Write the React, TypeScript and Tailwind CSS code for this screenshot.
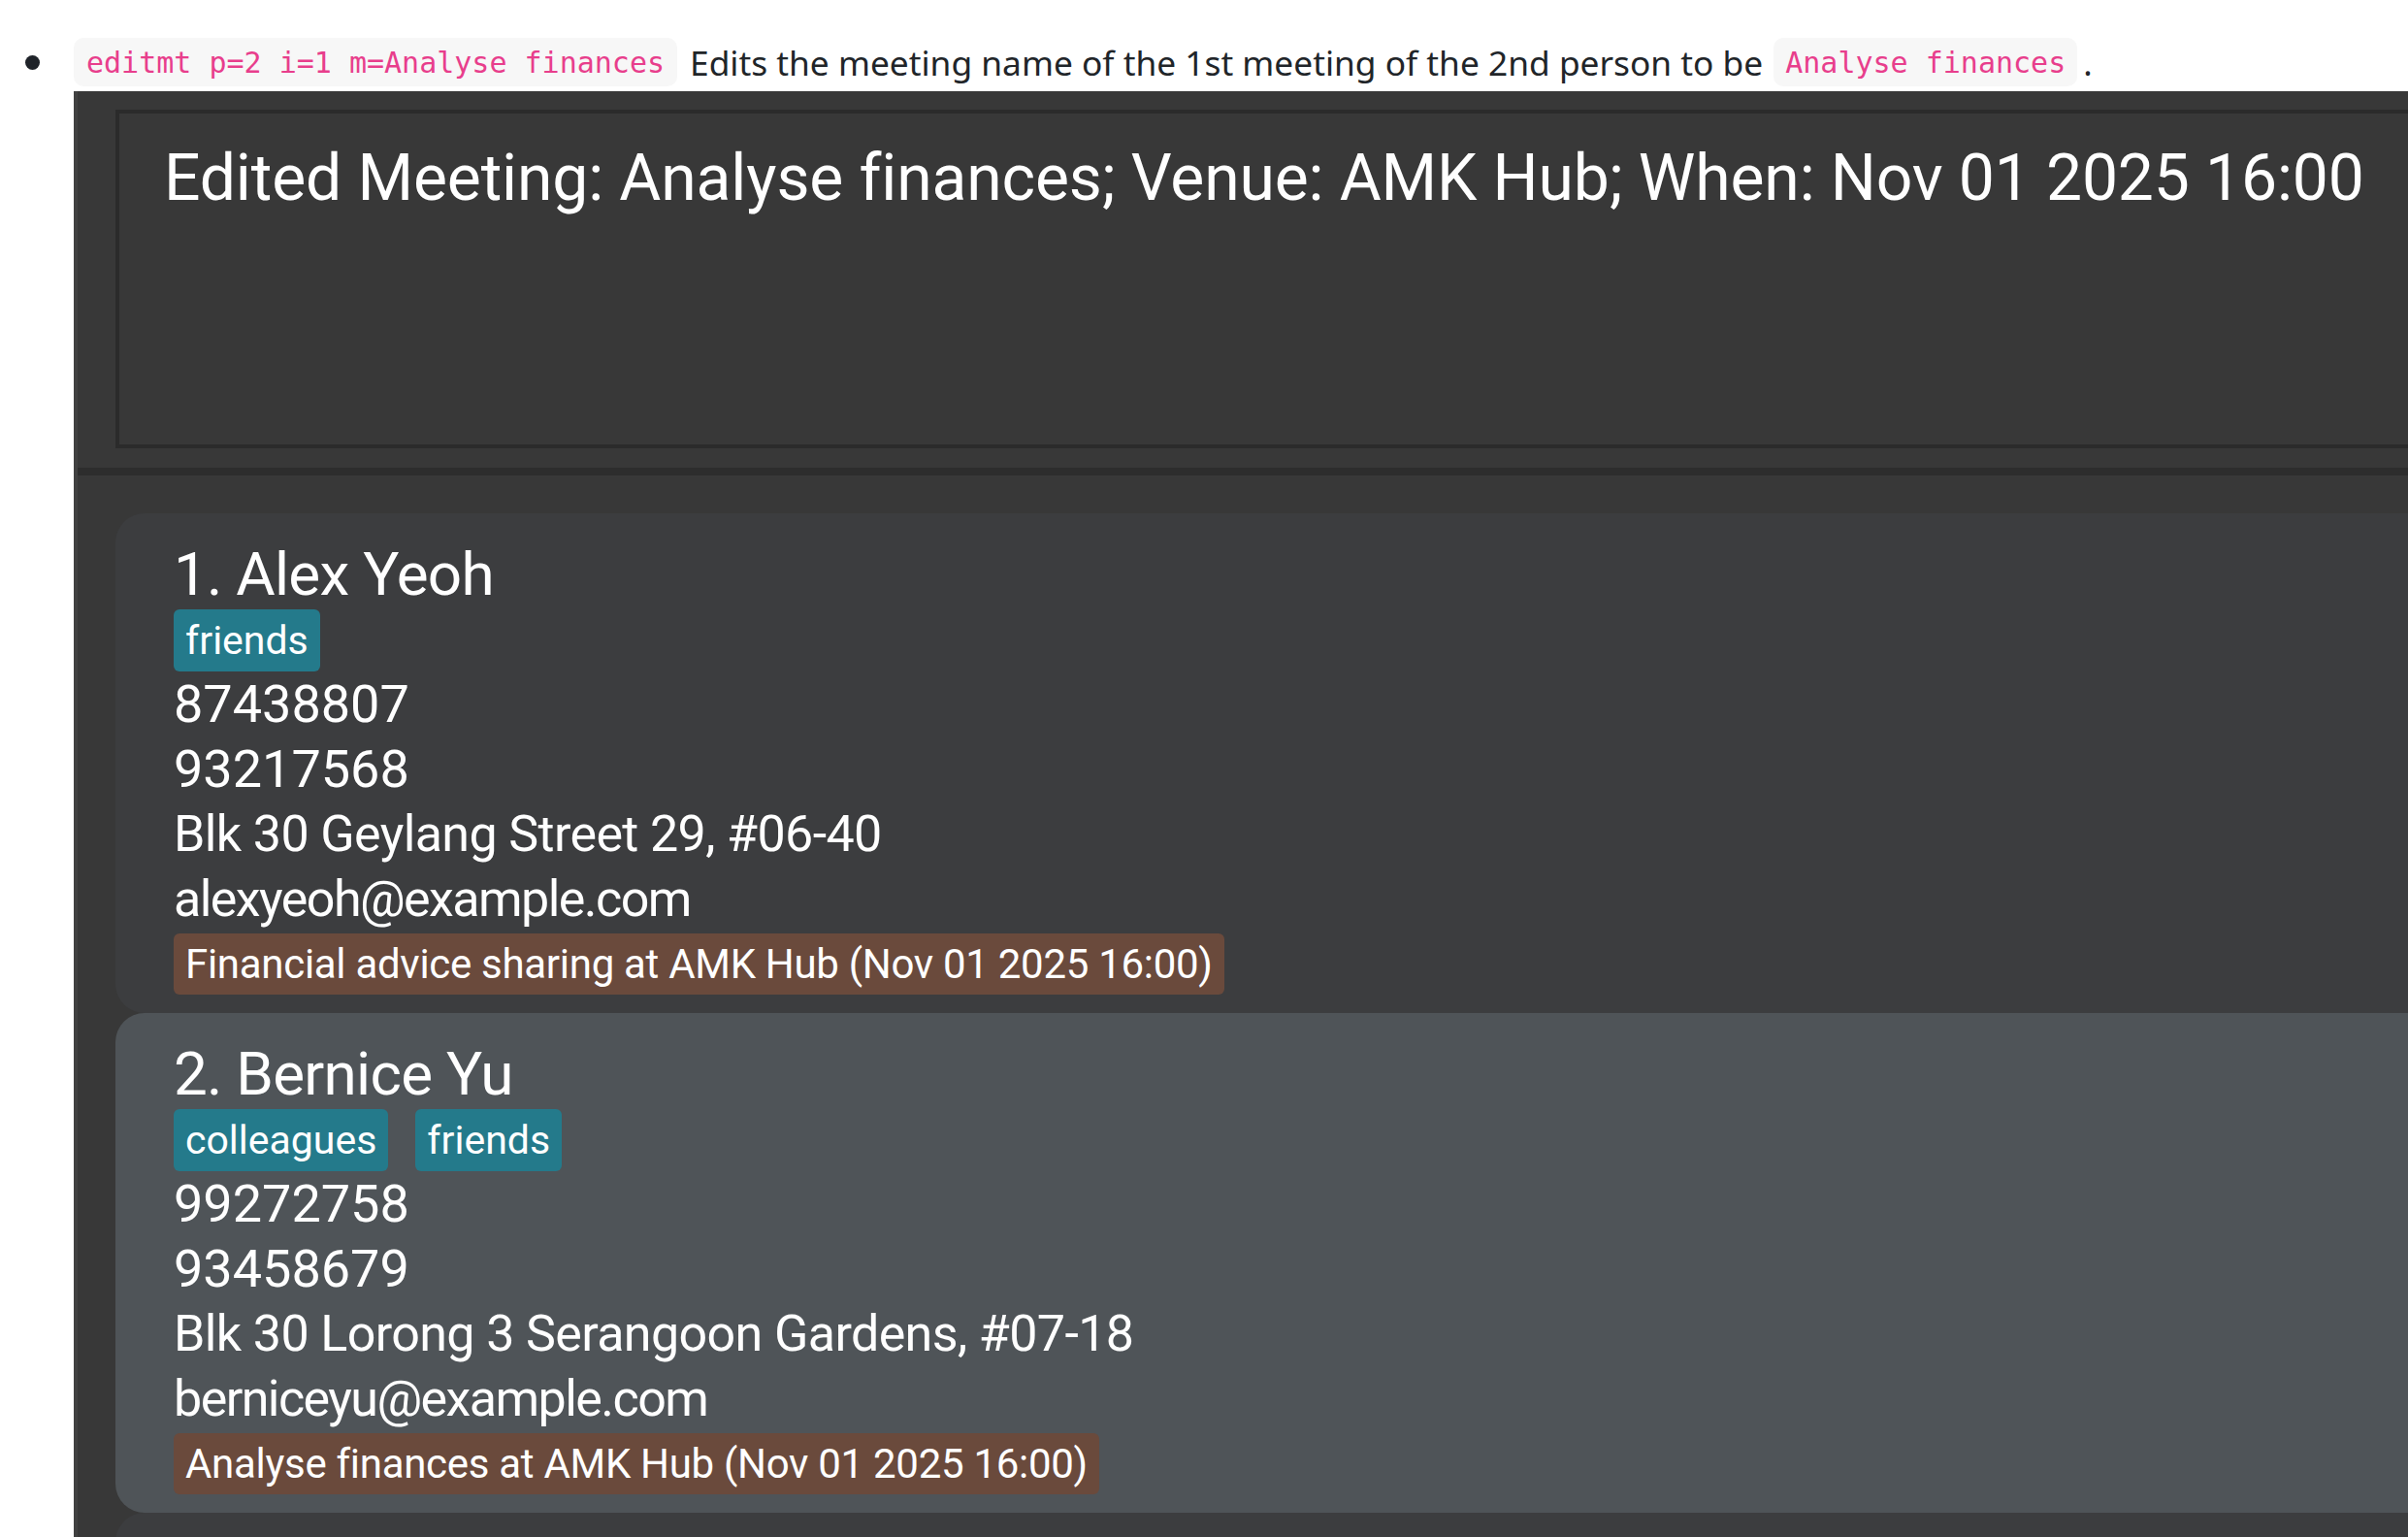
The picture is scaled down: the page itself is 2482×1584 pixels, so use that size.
const people = [
  {
    name: "1. Alex Yeoh",
    tags: ["friends"],
    phones: ["87438807", "93217568"],
    address: "Blk 30 Geylang Street 29, #06-40",
    email: "alexyeoh@example.com",
    meeting: "Financial advice sharing at AMK Hub (Nov 01 2025 16:00)",
  },
  {
    name: "2. Bernice Yu",
    tags: ["colleagues", "friends"],
    phones: ["99272758", "93458679"],
    address: "Blk 30 Lorong 3 Serangoon Gardens, #07-18",
    email: "berniceyu@example.com",
    meeting: "Analyse finances at AMK Hub (Nov 01 2025 16:00)",
  },
];

type Person = (typeof people)[number];

const app = { fontFamily: "Roboto, 'Liberation Sans', sans-serif" };

function Card({ p, odd }: { p: Person; odd: boolean }) {
  return (
    <div
      className={`rounded-l-[30px] pl-[60px] pt-[27px] pb-[19px] text-white ${
        odd ? "bg-[#4f5458]" : "bg-[#3c3d3f]"
      }`}
      style={app}
    >
      <div className="text-[62px] leading-[72px] tracking-[-0.012em]">{p.name}</div>
      <div className="flex gap-[28px]">
        {p.tags.map((t) => (
          <div
            key={t}
            className="h-[64px] px-[12px] pt-[1px] rounded-[6px] bg-[#247a8b] text-[41px] leading-[63px]"
          >
            {t}
          </div>
        ))}
      </div>
      {p.phones.map((ph) => (
        <div key={ph} className="text-[54px] leading-[67px]">
          {ph}
        </div>
      ))}
      <div className="text-[52px] leading-[67px] tracking-[-0.012em]">{p.address}</div>
      <div className="text-[52px] leading-[67px] tracking-[-0.03em]">{p.email}</div>
      <div className="mt-[2px] flex">
        <div className="h-[63px] px-[12px] rounded-[6px] bg-[#6a4a3c] text-[42px] leading-[63px] tracking-[-0.007em]">
          {p.meeting}
        </div>
      </div>
    </div>
  );
}

export default function App() {
  return (
    <div className="w-[2482px] h-[1584px] overflow-hidden bg-white">
      {/* doc line */}
      <div className="h-[94px] pt-[39px]">
        <div
          className="flex items-center h-[50px] text-[35.3px] text-[#212529] whitespace-nowrap"
          style={{ fontFamily: "'Noto Sans', 'Open Sans', sans-serif" }}
        >
          <div className="ml-[26px] w-[15px] h-[15px] rounded-full bg-[#1f2329]" />
          <code
            className="ml-[35px] h-[50px] px-[13px] flex items-center rounded-[10px] bg-[#f7f7f7] text-[30px] text-[#e83e8c]"
            style={{ fontFamily: "'DejaVu Sans Mono', 'Liberation Mono', monospace" }}
          >
            editmt p=2 i=1 m=Analyse finances
          </code>
          <span className="ml-[13px]">Edits the meeting name of the 1st meeting of the 2nd person to be</span>
          <code
            className="ml-[11px] h-[50px] px-[12px] flex items-center rounded-[10px] bg-[#f7f7f7] text-[30px] text-[#e83e8c]"
            style={{ fontFamily: "'DejaVu Sans Mono', 'Liberation Mono', monospace" }}
          >
            Analyse finances
          </code>
          <span className="ml-[6px]">.</span>
        </div>
      </div>

      {/* app screenshot */}
      <div className="ml-[76px] h-[1490px] bg-[#383838] border-l-4 border-[#414141] overflow-hidden">
        <div className="w-[2600px]">
          <div className="pt-[19px] pl-[39px] pb-[20px]">
            <div className="h-[349px] border-4 border-[#2b2b2b] pl-[46px] pt-[34px]">
              <div className="text-[66px] leading-[66px] text-white tracking-[-0.002em]" style={app}>
                Edited Meeting: Analyse finances; Venue: AMK Hub; When: Nov 01 2025 16:00
              </div>
            </div>
          </div>
          <div className="h-[8px] bg-[#2d2d2d]" />
          <div className="pt-[39px] pl-[39px] flex flex-col">
            {people.map((p, i) => (
              <Card key={p.name} p={p} odd={i % 2 === 1} />
            ))}
            {/* next cell, only its top edge is in view */}
            <div className="h-[120px] rounded-l-[30px] bg-[#3c3d3f]" />
          </div>
        </div>
      </div>
    </div>
  );
}
